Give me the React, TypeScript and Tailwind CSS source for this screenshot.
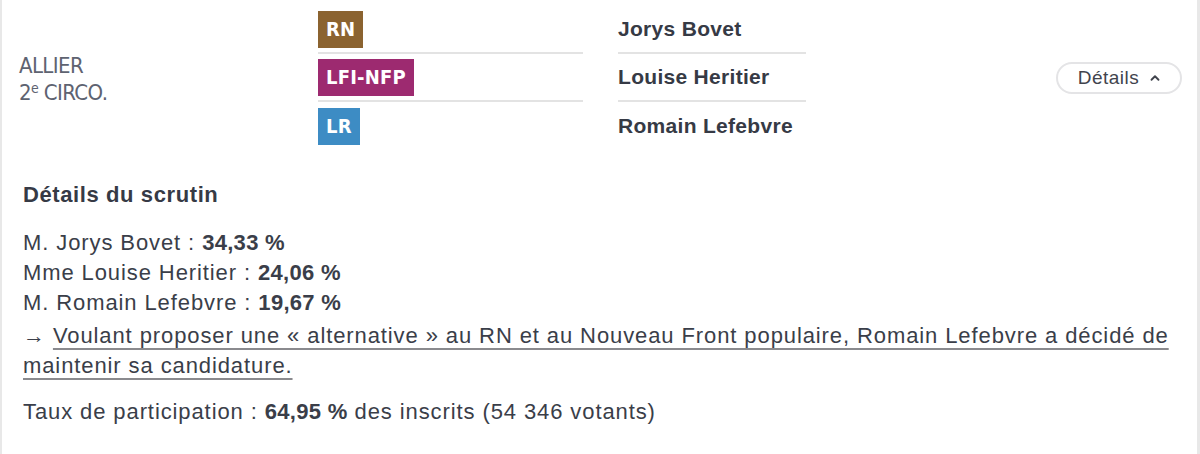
import { ChevronUp } from 'lucide-react'

const parties = [
  { label: 'RN', color: 'bg-[#8b6330]' },
  { label: 'LFI-NFP', color: 'bg-[#9d2a70]' },
  { label: 'LR', color: 'bg-[#3d8cc4]' },
]

const candidates = ['Jorys Bovet', 'Louise Heritier', 'Romain Lefebvre']

const results = [
  { name: 'M. Jorys Bovet', score: '34,33 %' },
  { name: 'Mme Louise Heritier', score: '24,06 %' },
  { name: 'M. Romain Lefebvre', score: '19,67 %' },
]

const condensed = { fontFamily: '"DejaVu Sans Condensed", "Liberation Sans Narrow", sans-serif', fontStretch: 'condensed' }

export default function App() {
  return (
    <div
      className="h-[454px] w-[1200px] border-l-2 border-r-[3px] border-[#e8e8e8] bg-white text-[#3a3e49]"
      style={{ fontFamily: '"Liberation Sans", Arial, sans-serif' }}
    >
      {/* Header row */}
      <div className="flex h-[160px] items-start pt-[6px]">
        <div
          className="mt-[46px] w-[316px] pl-[17px] text-[22px] leading-[27px] tracking-[-0.6px] text-[#5e6371]"
          style={condensed}
        >
          <div>ALLIER</div>
          <div>
            2<sup className="text-[14px]">e</sup> CIRCO.
          </div>
        </div>

        {/* Parties */}
        <div className="w-[265px]">
          {parties.map((p, i) => (
            <div
              key={p.label}
              className={`flex h-[48px] items-center ${i < 2 ? 'border-b-2 border-[#e3e3e3]' : ''}`}
            >
              <span
                className={`${p.color} flex h-[37px] items-center px-[8px] text-[20px] font-semibold tracking-[0.2px] text-white`}
                style={condensed}
              >
                {p.label}
              </span>
            </div>
          ))}
        </div>

        {/* Candidates */}
        <div className="ml-[35px] w-[188px]">
          {candidates.map((c, i) => (
            <div
              key={c}
              className={`flex h-[48px] items-center text-[21px] font-bold tracking-[0.3px] text-[#363a45] ${i < 2 ? 'border-b-2 border-[#e3e3e3]' : ''}`}
            >
              {c}
            </div>
          ))}
        </div>

        <div className="ml-auto mr-[15px] mt-[56px]">
          <button className="flex h-[32px] w-[126px] items-center justify-center gap-[9px] rounded-full border-2 border-[#e4e4e6] pl-[2px] text-[19px] tracking-[0.5px] text-[#41444d]">
            Détails
            <ChevronUp size={14} strokeWidth={3.2} />
          </button>
        </div>
      </div>

      {/* Details */}
      <div className="px-[21px] pt-[20px] text-[22px] leading-[30px] tracking-[0.9px]">
        <h2 className="font-bold tracking-[0.6px] text-[#363a45]">Détails du scrutin</h2>
        <div className="mt-[18px]">
          {results.map((r) => (
            <div key={r.name}>
              {r.name} : <b className="font-bold tracking-[0.3px]">{r.score}</b>
            </div>
          ))}
        </div>
        <p className="mt-[3px]">
          →{' '}
          <a className="underline decoration-[#8a8a8e] decoration-2 underline-offset-[5px]">
            Voulant proposer une « alternative » au RN et au Nouveau Front populaire, Romain Lefebvre a décidé de maintenir sa candidature.
          </a>
        </p>
        <p className="mt-[16px]">
          Taux de participation : <b className="font-bold tracking-[0.3px]">64,95 %</b> des inscrits (54 346 votants)
        </p>
      </div>
    </div>
  )
}
